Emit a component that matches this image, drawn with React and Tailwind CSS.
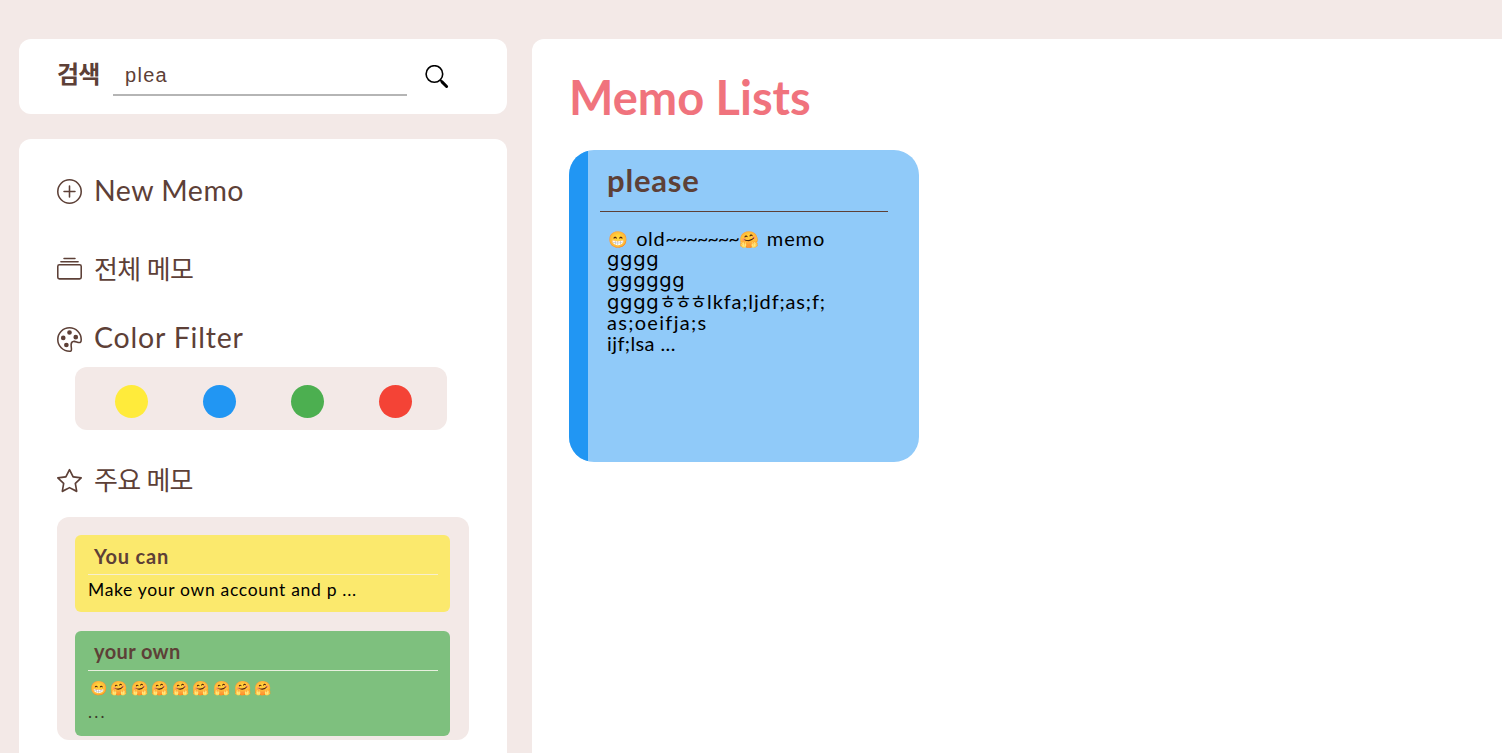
import { BsPlusCircle, BsCollection, BsPalette, BsStar } from "react-icons/bs";

function MenuItem({ icon: Icon, className, iconClass, labelClass, children }) {
  return (
    <a className={`flex h-[38px] items-center gap-3 text-[#5d4037] ${className}`}>
      <Icon className={`size-[25px] shrink-0 ${iconClass}`} />
      <span className={`whitespace-nowrap leading-[38px] ${labelClass}`}>{children}</span>
    </a>
  );
}

function SearchIcon() {
  return (
    <svg viewBox="0 0 24 24" className="ml-[18px] size-6" fill="none" stroke="#000">
      <circle cx="9.4" cy="9" r="8.3" strokeWidth="1.6" />
      <path d="M15.2 14.8l2 2" strokeWidth="1.8" />
      <path d="M17 16.9l4.6 4.6" strokeWidth="3" strokeLinecap="round" />
    </svg>
  );
}

function Emoji({ className, children }) {
  return (
    <span className={`inline-block align-top tracking-normal hue-rotate-[-12deg] ${className}`}>{children}</span>
  );
}

const filters = ["bg-[#ffeb3b]", "bg-[#2196f3]", "bg-[#4caf50]", "bg-[#f44336]"];
const faces = ["😁", "🤗", "🤗", "🤗", "🤗", "🤗", "🤗", "🤗", "🤗"];

export default function App() {
  return (
    <div className="flex h-[753px] gap-[25px] overflow-hidden bg-[#f3e9e7] pl-[19px] pt-[39px] font-['Lato','Noto_Sans_CJK_KR',sans-serif] text-[#5d4037]">
      <aside className="flex w-[488px] shrink-0 flex-col gap-[25px]">
        <section className="flex h-[75px] shrink-0 items-start rounded-xl bg-white pl-[38px]">
          <label className="mt-[17px] w-14 whitespace-nowrap text-[24px] font-bold leading-9 tracking-[-0.8px]">검색</label>
          <input
            defaultValue="plea"
            className="mt-[17px] h-10 w-[294px] border-b-2 border-[#b5b5b5] pl-3 font-['Liberation_Sans',sans-serif] text-[20px] tracking-[1.3px] outline-none"
          />
          <div className="mt-[26px]"><SearchIcon /></div>
        </section>

        <nav className="flex h-[640px] shrink-0 flex-col rounded-xl bg-white px-[38px] pt-[32px]">
          <MenuItem icon={BsPlusCircle} className="" iconClass="mt-[3px]" labelClass="text-[28.5px] tracking-[0.5px]">New Memo</MenuItem>
          <MenuItem icon={BsCollection} className="mt-[41px]" iconClass="mt-px" labelClass="text-[26px] tracking-[-0.6px]">전체 메모</MenuItem>
          <MenuItem icon={BsPalette} className="mt-[30px]" iconClass="mt-[4px]" labelClass="text-[28.5px] tracking-[0.8px]">Color Filter</MenuItem>
          <div className="ml-[18px] mt-[11px] flex h-[63px] w-[372px] items-center justify-between rounded-xl bg-[#f3e9e7] pl-10 pr-[35px] pt-[6px]">
            {filters.map((color) => (
              <button key={color} className={`size-[33px] rounded-full ${color}`} />
            ))}
          </div>
          <MenuItem icon={BsStar} className="mt-[31px]" iconClass="mt-px" labelClass="text-[26px] tracking-[-0.7px]">주요 메모</MenuItem>
          <div className="mt-[18px] flex h-[223px] flex-col gap-[19px] overflow-hidden rounded-xl bg-[#f3e9e7] pl-[18px] pr-[19px] pt-[18px]">
            <article className="h-[77px] rounded-md bg-[#fbe96d] px-3 pl-[13px]">
              <h3 className="h-10 border-b border-[#f7efcf] pl-1.5 text-[20px] font-bold leading-[43px] tracking-[0.8px]">You can</h3>
              <p className="whitespace-nowrap text-[17.5px] leading-[30px] tracking-[0.68px] text-black">Make your own account and p ...</p>
            </article>
            <article className="h-[105px] rounded-md bg-[#7ec07e] px-3 pl-[13px]">
              <h3 className="h-10 border-b border-[#e8f0df] pl-1.5 text-[20px] font-bold leading-[41px] tracking-[0.4px]">your own</h3>
              <p className="flex h-[34px] whitespace-nowrap pl-[1.5px] text-black">
                {faces.map((face, i) => (
                  <Emoji key={i} className="w-[20.6px] text-[14px] leading-[33px]">{face}</Emoji>
                ))}
              </p>
              <p className="text-[17px] leading-[14px] tracking-[2.2px] text-[#3c3a2a]">...</p>
            </article>
          </div>
        </nav>
      </aside>

      <main className="h-[714px] min-w-0 flex-1 rounded-tl-xl bg-white pl-[37px] pt-[28px]">
        <h1 className="h-[83px] whitespace-nowrap text-[47px] font-bold leading-[60px] text-[#f0737d]">Memo Lists</h1>
        <article className="flex h-[312px] w-[350px] overflow-hidden rounded-[25px] bg-[#90caf9]">
          <div className="w-[19px] shrink-0 bg-[#2196f3]" />
          <div className="ml-3 w-72">
            <h2 className="h-[62px] border-b border-[#5d4037] pl-[7px] text-[31px] font-bold leading-[60px] tracking-[0.8px]">please</h2>
            <div className="whitespace-nowrap pl-[7px] pt-4 text-[20px] leading-[21px] text-black">
              <p className="h-[21px]">
                <Emoji className="w-6 pl-px text-[16px]">😁</Emoji> <span className="tracking-[0.6px]">old</span>
                <span className="tracking-[-1.1px]">~~~~~~~</span>
                <Emoji className="w-[23px] text-[16px]">🤗</Emoji> <span className="tracking-[0.9px]">memo</span>
              </p>
              <p className="h-[21px] font-['Inter',sans-serif] tracking-[0.8px]">gggg</p>
              <p className="h-[21px] font-['Inter',sans-serif] tracking-[0.8px]">gggggg</p>
              <p className="h-[21px]">
                <span className="font-['Inter',sans-serif] tracking-[0.8px]">gggg</span>
                <span className="mr-0.5 text-[19px] tracking-[-2.2px]">ㅎㅎㅎ</span>
                <span className="tracking-[0.85px]">lkfa;ljdf;as;f;</span>
              </p>
              <p className="tracking-[1.3px]">as;oeifja;s</p>
              <p className="tracking-[0.4px]">ijf;lsa ...</p>
            </div>
          </div>
        </article>
      </main>
    </div>
  );
}
